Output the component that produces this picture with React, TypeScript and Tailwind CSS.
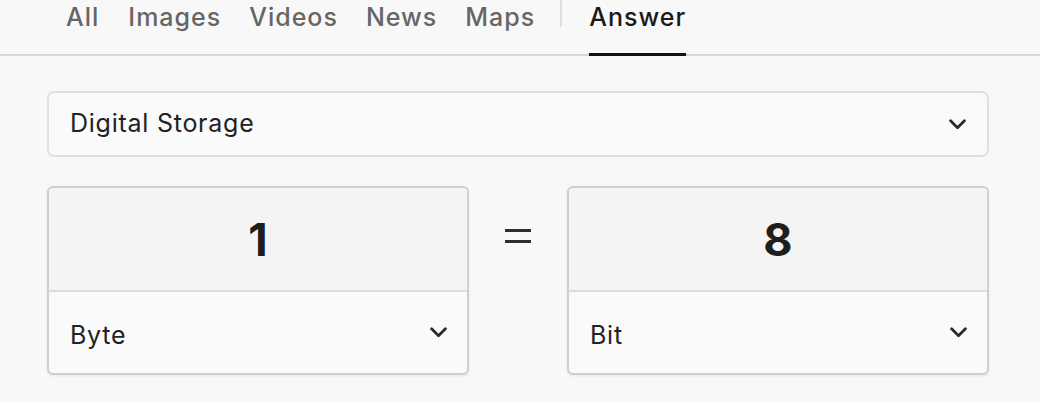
import React, { useState } from 'react';

const tabs = [
  { label: 'All', gap: 'mr-[29px]' },
  { label: 'Images', gap: 'mr-[28px]' },
  { label: 'Videos', gap: 'mr-[28px]' },
  { label: 'News', gap: 'mr-[28px]' },
  { label: 'Maps', gap: 'mr-[29px]' },
];

const Chevron: React.FC<{ className?: string }> = ({ className }) => (
  <svg viewBox="0 0 16 10" className={className} fill="none">
    <path d="M1.5 1.5 L8 8 L14.5 1.5" stroke="#2b2b2b" strokeWidth="2.6" strokeLinecap="round" strokeLinejoin="round" />
  </svg>
);

interface UnitCardProps {
  value: string;
  unit: string;
}

const UnitCard: React.FC<UnitCardProps> = ({ value, unit }) => (
  <div className="w-[422px] h-[189px] flex flex-col rounded-[6px] border-2 border-[#cfcfcf] bg-[#fafafa] shadow-[0_1px_3px_rgba(0,0,0,0.08)] overflow-hidden">
    <div className="h-[104px] flex items-center justify-center bg-[#f4f4f4] border-b-2 border-[#dcdcdc]">
      <span className="text-[45px] font-bold text-[#1e1e1e] leading-none">{value}</span>
    </div>
    <div className="flex-1 flex items-center justify-between pl-[21px] pr-[20px] pt-[6px]">
      <span className="text-[25px] tracking-[0.03em] text-[#222]">{unit}</span>
      <Chevron className="w-[17px] h-[11px] -mt-[6px]" />
    </div>
  </div>
);

export default function App() {
  const [active] = useState('Answer');

  return (
    <div
      className="w-[1040px] h-[402px] bg-[#f8f8f8] overflow-hidden"
      style={{ fontFamily: 'Inter, "Open Sans", sans-serif' }}
    >
      {/* Tabs */}
      <div className="h-[56px] border-b-2 border-[#d6d6d6] flex items-stretch pl-[66px]">
        {tabs.map((tab) => (
          <div key={tab.label} className={`${tab.gap} pt-[2px] text-[25px] tracking-[0.04em] font-medium text-[#666] leading-[30px]`}>
            {tab.label}
          </div>
        ))}
        <div className="mr-[27px] -ml-[4px] w-[2px] h-[27px] bg-[#dedede]" />
        <div
          className={`pt-[2px] text-[25px] tracking-[0.04em] font-medium leading-[30px] -mb-[2px] border-b-[3px] ${
            active === 'Answer' ? 'text-[#1a1a1a] border-[#111]' : 'text-[#666] border-transparent'
          }`}
        >
          Answer
        </div>
      </div>

      <div className="pl-[47px] pr-[51px] pt-[35px]">
        {/* Category select */}
        <div className="h-[66px] flex items-center justify-between rounded-[7px] border-2 border-[#e0e0e0] bg-[#fafafa] pl-[21px] pr-[21px]">
          <span className="text-[25px] tracking-[0.03em] text-[#222]">Digital Storage</span>
          <Chevron className="w-[17px] h-[11px]" />
        </div>

        {/* Converter */}
        <div className="mt-[29px] flex items-center justify-between">
          <UnitCard value="1" unit="Byte" />
          <div className="flex flex-col gap-[8px] -mt-[90px]">
            <div className="w-[26px] h-[3px] bg-[#2e2e2e]" />
            <div className="w-[26px] h-[3px] bg-[#2e2e2e]" />
          </div>
          <UnitCard value="8" unit="Bit" />
        </div>
      </div>
    </div>
  );
}
